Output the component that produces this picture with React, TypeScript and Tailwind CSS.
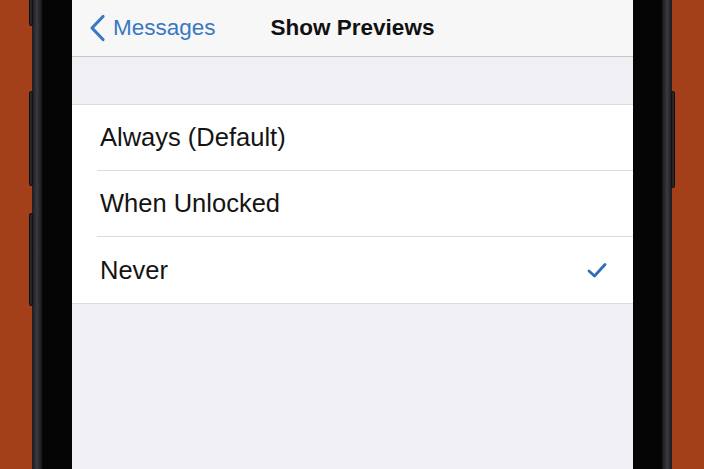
const OPTIONS = [
  { label: 'Always (Default)', checked: false },
  { label: 'When Unlocked', checked: false },
  { label: 'Never', checked: true },
];

const SideButton = ({ top, height, side }: { top: number; height: number; side: 'left' | 'right' }) => (
  <div
    className={`absolute w-[4px] rounded-sm border border-[#111] bg-[#26262a] ${side === 'left' ? 'left-[-3px]' : 'right-[-3px]'}`}
    style={{ top, height }}
  />
);

export default function App() {
  return (
    <div
      className="flex h-[469px] w-[704px] overflow-hidden bg-[#a3401a]"
      style={{ fontFamily: '"Liberation Sans", Arial, sans-serif' }}
    >
      <div className="w-[32px] shrink-0" />
      <div className="relative w-[10px] shrink-0 bg-gradient-to-r from-[#1c1c1f] via-[#3a3a3f] to-[#18181a]">
        <SideButton side="left" top={-6} height={32} />
        <SideButton side="left" top={91} height={95} />
        <SideButton side="left" top={213} height={93} />
      </div>
      <div className="w-[30px] shrink-0 bg-[#050505]" />

      <div className="flex w-[561px] shrink-0 flex-col bg-[#efeff4]">
        <div className="relative flex h-[57px] shrink-0 items-center border-b border-[#c8c8cc] bg-[#f7f7f8]">
          <div className="relative z-10 flex items-center pl-[17px] text-[#3a78c0]">
            <svg width="17" height="28" viewBox="0 0 17 28" fill="none" className="mr-[7px]">
              <path
                d="M14 2.5 L3 14 L14 25.5"
                stroke="#3a78c0"
                strokeWidth="3.2"
                strokeLinecap="round"
                strokeLinejoin="round"
              />
            </svg>
            <span className="text-[22.5px]">Messages</span>
          </div>
          <div className="absolute inset-x-0 top-0 flex h-full items-center justify-center text-[22.5px] font-bold text-[#111]">
            Show Previews
          </div>
        </div>

        <div className="h-[47px] shrink-0" />

        <div className="border-y border-[#dcdce0] bg-white">
          {OPTIONS.map((opt, i) => (
            <div key={opt.label} className="pl-[25px]">
              <div
                className={`flex h-[66px] items-center pr-[26px] ${i < OPTIONS.length - 1 ? 'border-b border-[#dcdce0]' : ''}`}
              >
                <span className="flex-1 pl-[3px] text-[25.5px] text-[#141414]">{opt.label}</span>
                {opt.checked && (
                  <svg width="20" height="16" viewBox="0 0 20 16" fill="none">
                    <path
                      d="M2 9 L7.5 14 L18 2.5"
                      stroke="#2f6db5"
                      strokeWidth="2.8"
                      strokeLinecap="round"
                      strokeLinejoin="round"
                    />
                  </svg>
                )}
              </div>
            </div>
          ))}
        </div>

        <div className="flex-1" />
      </div>

      <div className="w-[29px] shrink-0 bg-[#050505]" />
      <div className="relative w-[10px] shrink-0 bg-gradient-to-r from-[#18181a] via-[#3a3a3f] to-[#1c1c1f]">
        <SideButton side="right" top={91} height={97} />
      </div>
      <div className="w-[32px] shrink-0" />
    </div>
  );
}
